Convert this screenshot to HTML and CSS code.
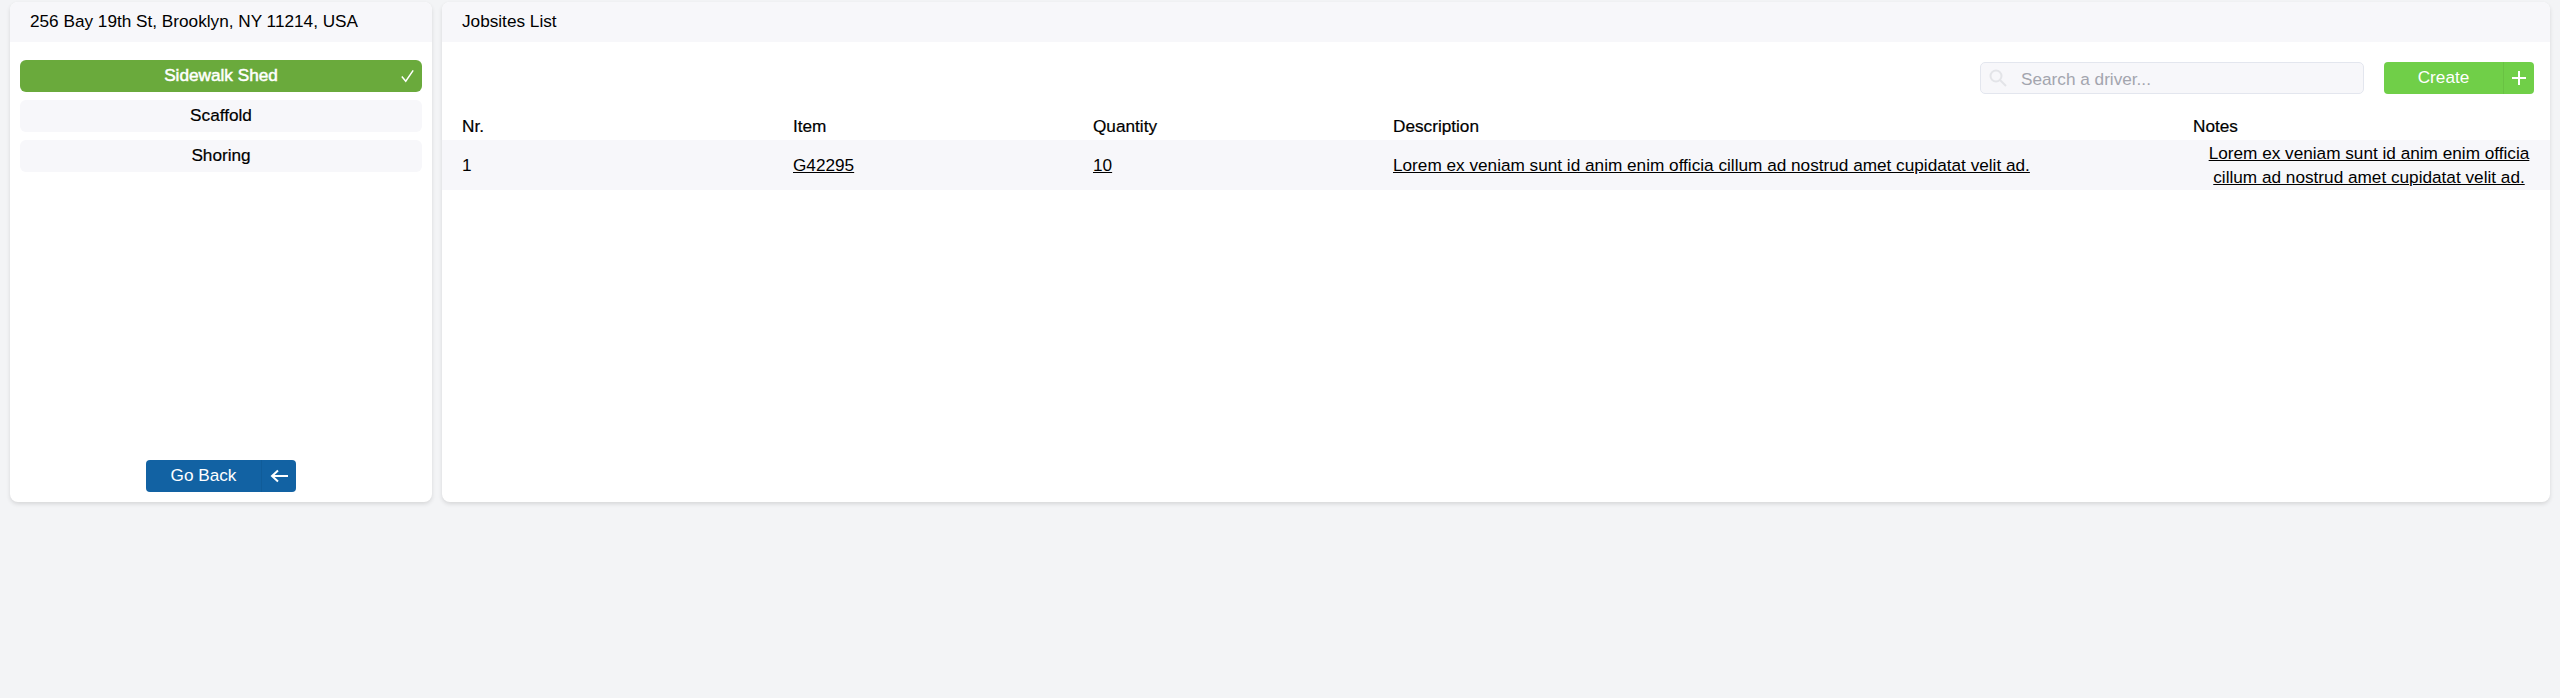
FILE: index.html
```html
<!DOCTYPE html>
<html lang="en">
<head>
<meta charset="utf-8">
<title>Jobsites List</title>
<link rel="stylesheet" href="styles.css">
</head>
<body>
<main class="layout">
  <aside class="card side">
    <header class="card-head side-head">256 Bay 19th St, Brooklyn, NY 11214, USA</header>
    <div class="side-body">
      <ul class="options">
        <li class="option option-active">Sidewalk Shed
          <svg class="check" viewBox="0 0 16 16" width="15" height="14" fill="none" stroke="#fff" stroke-width="1.7"><path d="M1.5 8.5 6 14 14.5 1.5"/></svg>
        </li>
        <li class="option">Scaffold</li>
        <li class="option">Shoring</li>
      </ul>
      <button class="btn btn-back" type="button"><span class="btn-label">Go Back</span><span class="btn-icon"><svg viewBox="0 0 18 14" width="18" height="14" fill="none" stroke="#fff" stroke-width="2"><path d="M18 7H2M8 1.5 2 7l6 5.5"/></svg></span></button>
    </div>
  </aside>
  <section class="card content">
    <header class="card-head content-head">Jobsites List</header>
    <div class="toolbar">
      <label class="search">
        <svg class="search-icon" viewBox="0 0 18 18" width="18" height="18" fill="none" stroke="#e3e4e8" stroke-width="2"><circle cx="7" cy="7" r="5.5"/><path d="M11 11l6 6"/></svg>
        <input class="search-input" type="text" placeholder="Search a driver...">
      </label>
      <button class="btn btn-create" type="button"><span class="btn-label">Create</span><span class="btn-icon"><svg viewBox="0 0 14 14" width="14" height="14" fill="none" stroke="#fff" stroke-width="2"><path d="M7 0v14M0 7h14"/></svg></span></button>
    </div>
    <table class="table">
      <colgroup><col class="col-nr"><col class="col-item"><col class="col-qty"><col class="col-desc"><col></colgroup>
      <thead>
        <tr><th>Nr.</th><th>Item</th><th>Quantity</th><th>Description</th><th>Notes</th></tr>
      </thead>
      <tbody>
        <tr>
          <td>1</td>
          <td><a href="#">G42295</a></td>
          <td><a href="#">10</a></td>
          <td><a href="#">Lorem ex veniam sunt id anim enim officia cillum ad nostrud amet cupidatat velit ad.</a></td>
          <td class="notes"><a href="#">Lorem ex veniam sunt id anim enim officia cillum ad nostrud amet cupidatat velit ad.</a></td>
        </tr>
      </tbody>
    </table>
  </section>
</main>
</body>
</html>
```
FILE: styles.css
```css
* { box-sizing: border-box; }
html, body { margin: 0; height: 100%; }
body {
  background: #f3f4f6;
  color: #000;
  font-family: "Liberation Sans", Arial, sans-serif;
  font-size: 17.2px;
  line-height: 24px;
}
.layout {
  display: flex;
  gap: 10px;
  padding: 2px 10px 0;
  height: 502px;
}
.card {
  background: #fff;
  border-radius: 8px;
  box-shadow: 0 2px 4px rgba(0,0,0,.12);
  overflow: hidden;
  display: flex;
  flex-direction: column;
}
.side { width: 422px; flex: none; }
.content { flex: 1; min-width: 0; }
.card-head {
  background: #f7f7fa;
  height: 40px;
  flex: none;
  display: flex;
  align-items: center;
  padding-bottom: 2px;
}
.side-head { padding-left: 20px; }
.content-head { padding-left: 20px; }
.side-body {
  flex: 1;
  display: flex;
  flex-direction: column;
  align-items: center;
  padding: 18px 10px 10px;
}
.options {
  list-style: none;
  margin: 0;
  padding: 0;
  width: 100%;
  flex: 1;
  display: flex;
  flex-direction: column;
  gap: 8px;
}
.option {
  position: relative;
  height: 32px;
  line-height: 30px;
  text-align: center;
  background: #f7f7fa;
  border-radius: 6px;
  -webkit-text-stroke: .2px #000;
}
.option-active {
  background: #6aaa3c;
  color: #fff;
  -webkit-text-stroke: .5px #fff;
}
.check { position: absolute; right: 7px; top: 9px; }
.btn {
  display: flex;
  width: 150px;
  height: 32px;
  padding: 0;
  border: 0;
  border-radius: 4px;
  color: #fff;
  font: inherit;
  cursor: pointer;
  overflow: hidden;
}
.btn-label { flex: 1; line-height: 30px; text-align: center; }
.btn-icon {
  flex: none;
  display: flex;
  align-items: center;
  justify-content: center;
  border-left: 1px solid rgba(0,0,0,.06);
}
.btn-back { background: #1262a3; flex: none; }
.btn-back .btn-icon { width: 35px; }
.btn-create { background: #70cf48; }
.btn-create .btn-icon { width: 31px; }
.toolbar {
  display: flex;
  justify-content: flex-end;
  gap: 20px;
  padding: 20px 16px 0 0;
}
.search {
  position: relative;
  display: block;
  width: 384px;
  height: 32px;
}
.search-icon { position: absolute; left: 9px; top: 7px; }
.search-input {
  width: 100%;
  height: 100%;
  padding: 2px 8px 0 40px;
  background: #f7f7fa;
  border: 1px solid #e3e6ee;
  border-radius: 5px;
  font: inherit;
  outline: none;
}
.search-input::placeholder { color: #a3a5ae; opacity: 1; }
.table {
  width: 100%;
  table-layout: fixed;
  border-collapse: collapse;
  margin-top: 20px;
}
.col-nr { width: 331px; }
.col-item, .col-qty { width: 300px; }
.col-desc { width: 800px; }
.table th {
  height: 26px;
  padding: 0 0 2px 20px;
  text-align: left;
  font-weight: 400;
  -webkit-text-stroke: .2px #000;
}
.table td {
  height: 50px;
  padding: 0 0 0 20px;
  background: #f7f7fa;
}
.table td.notes { padding-right: 5px; text-align: center; }
.table a { color: inherit; text-decoration: underline; }
```
